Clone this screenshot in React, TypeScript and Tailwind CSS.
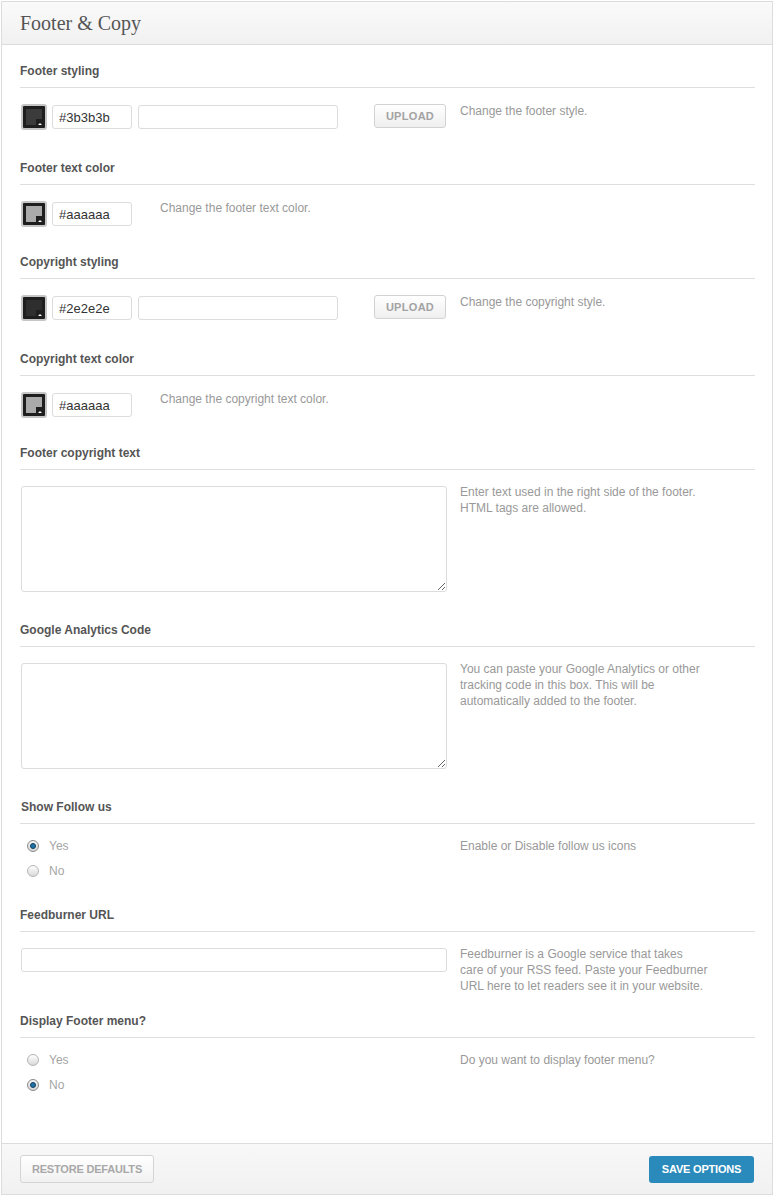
import React from "react";

const sans = { fontFamily: '"Liberation Sans", Arial, sans-serif' };

function Swatch({ color }: { color: string }) {
  return (
    <div className="relative w-[26px] h-[26px] rounded-[3px] border-2 border-[#c6c6c6] bg-[#1e1e1e] p-[3px]">
      <div className="w-full h-full" style={{ backgroundColor: color }} />
      <div className="absolute right-[2px] bottom-[2px] w-[7px] h-[7px] bg-[#1e1e1e] flex items-end justify-center pb-[1px]">
        <div className="w-0 h-0 border-l-[2px] border-r-[2px] border-b-[2px] border-l-transparent border-r-transparent border-b-white" />
      </div>
    </div>
  );
}

function TextInput({ value, className }: { value?: string; className: string }) {
  return (
    <input
      readOnly
      value={value ?? ""}
      className={`h-6 rounded-[3px] border border-[#dcdcdc] bg-white px-[6px] text-[13px] text-[#333] outline-none ${className}`}
    />
  );
}

function Heading({ children, className }: { children: React.ReactNode; className: string }) {
  return (
    <div className={`border-b border-[#dedede] pb-2 ${className}`}>
      <h3 className="text-[12px] leading-4 font-bold text-[#555]">{children}</h3>
    </div>
  );
}

function Desc({ children, className = "" }: { children: React.ReactNode; className?: string }) {
  return <p className={`text-[12px] leading-4 text-[#999] ${className}`}>{children}</p>;
}

function UploadButton() {
  return (
    <button className="w-[72px] h-6 rounded-[3px] border border-[#d2d2d2] bg-gradient-to-b from-white to-[#efefef] text-[11px] leading-[20px] font-bold text-[#a3a3a3] tracking-[0.3px]">
      UPLOAD
    </button>
  );
}

function Radio({ checked, label }: { checked: boolean; label: string }) {
  return (
    <div className="flex items-center h-4 pl-[7px]">
      {checked ? (
        <span className="w-[12px] h-[12px] rounded-full border border-[#8a8a8a] bg-gradient-to-b from-[#f4f4f4] to-[#d6d6d6] flex items-center justify-center">
          <span className="w-[6px] h-[6px] rounded-full bg-[#1f72a8] border border-[#123f5e]" />
        </span>
      ) : (
        <span className="w-[12px] h-[12px] rounded-full border border-[#b4b4b4] bg-gradient-to-b from-white to-[#d9d9d9]" />
      )}
      <span className="ml-[10px] text-[12px] text-[#a5a5a5]">{label}</span>
    </div>
  );
}

function ColorRow({ color, upload, desc }: { color: string; upload: boolean; desc: string }) {
  return (
    <div className="mt-4 flex items-start pl-px">
      <div className="flex items-center h-[26px]">
        <Swatch color={color} />
        <TextInput value={color} className="ml-[5px] w-[80px]" />
        {upload && (
          <>
            <TextInput className="ml-[6px] w-[200px]" />
            <div className="ml-[36px] self-start -mt-px">
              <UploadButton />
            </div>
          </>
        )}
      </div>
      <Desc className={upload ? "ml-[14px] -mt-px" : "ml-[28px] -mt-px"}>{desc}</Desc>
    </div>
  );
}

export default function App() {
  return (
    <div className="pt-px pl-px bg-white min-h-[1197px]" style={sans}>
      <div className="w-[772px] border border-[#dcdcdc] bg-white">
        <div className="h-[43px] border-b border-[#dcdcdc] bg-gradient-to-b from-[#fafafa] to-[#f1f1f1] flex items-center px-[18px]">
          <h2
            className="text-[20px] text-[#555] leading-none"
            style={{ fontFamily: '"Liberation Serif", Georgia, serif' }}
          >
            Footer &amp; Copy
          </h2>
        </div>

        <div className="pl-[18px] pr-[17px] pb-[50px]">
          <Heading className="mt-[18px]">Footer styling</Heading>
          <ColorRow color="#3b3b3b" upload desc="Change the footer style." />

          <Heading className="mt-[30px]">Footer text color</Heading>
          <ColorRow color="#aaaaaa" upload={false} desc="Change the footer text color." />

          <Heading className="mt-[27px]">Copyright styling</Heading>
          <ColorRow color="#2e2e2e" upload desc="Change the copyright style." />

          <Heading className="mt-[30px]">Copyright text color</Heading>
          <ColorRow color="#aaaaaa" upload={false} desc="Change the copyright text color." />

          <Heading className="mt-[27px]">Footer copyright text</Heading>
          <div className="mt-4 flex items-start pl-px">
            <textarea
              readOnly
              className="w-[426px] h-[106px] rounded-[3px] border border-[#dcdcdc] bg-white outline-none block"
            />
            <Desc className="ml-[13px] -mt-[2px]">
              Enter text used in the right side of the footer.
              <br />
              HTML tags are allowed.
            </Desc>
          </div>

          <Heading className="mt-[30px]">Google Analytics Code</Heading>
          <div className="mt-4 flex items-start pl-px">
            <textarea
              readOnly
              className="w-[426px] h-[106px] rounded-[3px] border border-[#dcdcdc] bg-white outline-none block"
            />
            <Desc className="ml-[13px] -mt-[2px] w-[250px]">
              You can paste your Google Analytics or other tracking code in this box. This will be
              automatically added to the footer.
            </Desc>
          </div>

          <Heading className="mt-[30px] pl-px">Show Follow us</Heading>
          <div className="mt-[14px] flex items-start">
            <div className="w-[440px] flex flex-col gap-[9px]">
              <Radio checked label="Yes" />
              <Radio checked={false} label="No" />
            </div>
            <Desc>Enable or Disable follow us icons</Desc>
          </div>

          <Heading className="mt-[28px]">Feedburner URL</Heading>
          <div className="mt-[14px] flex items-start pl-px">
            <TextInput className="mt-[2px] w-[426px]" />
            <Desc className="ml-[13px] w-[252px]">
              Feedburner is a Google service that takes
              <br />
              care of your RSS feed. Paste your Feedburner
              <br />
              URL here to let readers see it in your website.
            </Desc>
          </div>

          <Heading className="mt-[19px]">Display Footer menu?</Heading>
          <div className="mt-[14px] flex items-start">
            <div className="w-[440px] flex flex-col gap-[9px]">
              <Radio checked={false} label="Yes" />
              <Radio checked label="No" />
            </div>
            <Desc>Do you want to display footer menu?</Desc>
          </div>
        </div>

        <div className="h-[51px] border-t border-[#dcdcdc] bg-gradient-to-b from-[#f8f8f8] to-[#f1f1f1] flex items-center justify-between px-[18px]">
          <button className="w-[134px] h-[28px] rounded-[3px] border border-[#d4d4d4] bg-gradient-to-b from-white to-[#f1f1f1] text-[11px] font-bold text-[#a8a8a8] tracking-[-0.2px]">
            RESTORE DEFAULTS
          </button>
          <button className="w-[105px] h-[27px] rounded-[3px] bg-[#2a8abb] text-[11px] font-bold text-white tracking-[-0.2px]">
            SAVE OPTIONS
          </button>
        </div>
      </div>
    </div>
  );
}
